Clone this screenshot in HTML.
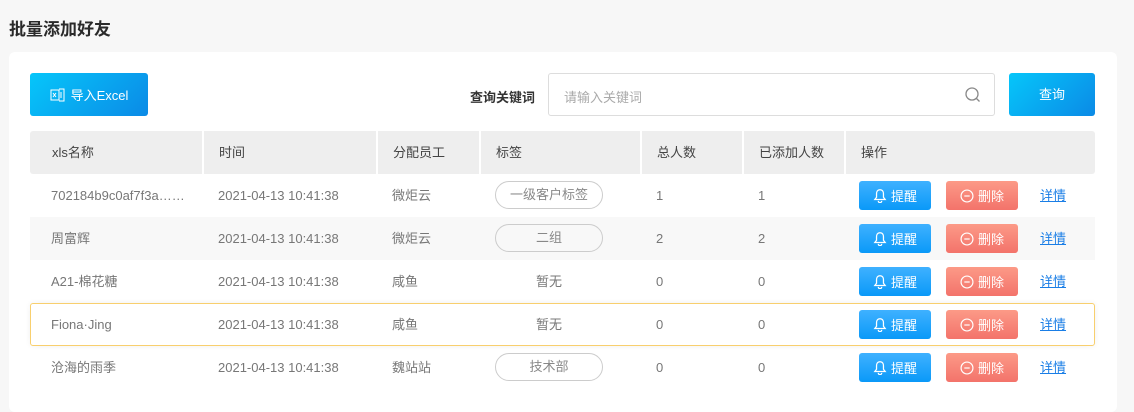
<!DOCTYPE html>
<html><head><meta charset="utf-8"><style>
*{margin:0;padding:0;box-sizing:border-box}
body{width:1134px;height:401px;background:#f7f7f7;font-family:"Liberation Sans","Noto Sans CJK SC",sans-serif;position:relative;overflow:hidden;color:#777;font-size:13px}
.a{position:absolute}
.title{left:9px;top:15px;font-size:17px;font-weight:bold;color:#2a2a2a}
.card{left:9px;top:52px;width:1108px;height:360px;background:#fff;border-radius:6px}
.btnx{left:30px;top:73px;width:118px;height:43px;border-radius:3px;background:linear-gradient(135deg,#06c6fa,#0b8ae6);color:#fff;font-size:13px;display:flex;align-items:center;justify-content:center;gap:6px}
.lbl{left:470px;top:87px;font-weight:bold;color:#333;font-size:13px}
.inp{left:548px;top:73px;width:447px;height:43px;border:1px solid #ddd;border-radius:3px;color:#aaa;padding:13px 0 0 15px}
.q{left:1009px;top:73px;width:86px;height:43px;border-radius:3px;background:linear-gradient(135deg,#06c6fa,#0b8ae6);color:#fff;line-height:43px;text-align:center}
.hd{left:30px;top:131px;width:1065px;height:43px;background:#eee;border-radius:3px}
.hc{top:131px;height:43px;line-height:43px;color:#444;padding-left:16px}
.sep{top:131px;width:2px;height:43px;background:#fff}
.row{left:30px;width:1065px;height:43px}
.c{line-height:43px;height:43px}
.tag{width:108px;height:28px;border:1px solid #ccc;border-radius:14px;text-align:center;line-height:26px;color:#888}
.b1{width:72px;height:29px;border-radius:3px;background:linear-gradient(#3fb1ff,#0a99f8);color:#fff;display:flex;align-items:center;justify-content:center;gap:4px}
.b2{width:72px;height:29px;border-radius:3px;background:linear-gradient(#fc9a87,#f3736b);color:#fff;display:flex;align-items:center;justify-content:center;gap:4px}
.lk{color:#1a7ee6;text-decoration:underline}
</style></head><body>
<div class="a title">批量添加好友</div>
<div class="a card"></div>
<div class="a btnx"><svg width="15" height="14" viewBox="0 0 15 14" fill="none" stroke="#fff" stroke-width="1"><rect x="1" y="2" width="8" height="10"/><path d="M9 1h5v12H9M3 5l3 4M6 5l-3 4M11 4v6"/></svg>导入Excel</div>
<div class="a lbl">查询关键词</div>
<div class="a inp">请输入关键词</div>
<svg class="a" style="left:964px;top:86px" width="18" height="18" viewBox="0 0 18 18" fill="none" stroke="#888" stroke-width="1.3"><circle cx="8" cy="8" r="6"/><path d="M12.5 12.5l3 3"/></svg>
<div class="a q">查询</div>
<div class="a hd"></div>
<div class="a sep" style="left:202px"></div><div class="a sep" style="left:376px"></div><div class="a sep" style="left:479px"></div><div class="a sep" style="left:640px"></div><div class="a sep" style="left:742px"></div><div class="a sep" style="left:844px"></div>
<div class="a hc" style="left:36px">xls名称</div><div class="a hc" style="left:203px">时间</div><div class="a hc" style="left:377px">分配员工</div><div class="a hc" style="left:480px">标签</div><div class="a hc" style="left:641px">总人数</div><div class="a hc" style="left:743px">已添加人数</div><div class="a hc" style="left:845px">操作</div>

<div class="a row" style="top:217px;background:#f8f8f8"></div>
<div class="a row" style="top:303px;border:1px solid #f8cf6e;border-radius:3px;box-shadow:0 0 6px rgba(0,0,0,.06)"></div>

<div class="a c" style="left:51px;top:174px">702184b9c0af7f3a……</div><div class="a c" style="left:218px;top:174px">2021-04-13 10:41:38</div><div class="a c" style="left:392px;top:174px">微炬云</div><div class="a tag" style="left:495px;top:181px">一级客户标签</div><div class="a c" style="left:656px;top:174px">1</div><div class="a c" style="left:758px;top:174px">1</div>
<div class="a c" style="left:51px;top:217px">周富辉</div><div class="a c" style="left:218px;top:217px">2021-04-13 10:41:38</div><div class="a c" style="left:392px;top:217px">微炬云</div><div class="a tag" style="left:495px;top:224px">二组</div><div class="a c" style="left:656px;top:217px">2</div><div class="a c" style="left:758px;top:217px">2</div>
<div class="a c" style="left:51px;top:260px">A21-棉花糖</div><div class="a c" style="left:218px;top:260px">2021-04-13 10:41:38</div><div class="a c" style="left:392px;top:260px">咸鱼</div><div class="a c" style="left:536px;top:260px">暂无</div><div class="a c" style="left:656px;top:260px">0</div><div class="a c" style="left:758px;top:260px">0</div>
<div class="a c" style="left:51px;top:303px">Fiona·Jing</div><div class="a c" style="left:218px;top:303px">2021-04-13 10:41:38</div><div class="a c" style="left:392px;top:303px">咸鱼</div><div class="a c" style="left:536px;top:303px">暂无</div><div class="a c" style="left:656px;top:303px">0</div><div class="a c" style="left:758px;top:303px">0</div>
<div class="a c" style="left:51px;top:346px">沧海的雨季</div><div class="a c" style="left:218px;top:346px">2021-04-13 10:41:38</div><div class="a c" style="left:392px;top:346px">魏站站</div><div class="a tag" style="left:495px;top:353px">技术部</div><div class="a c" style="left:656px;top:346px">0</div><div class="a c" style="left:758px;top:346px">0</div>

<div class="a b1" style="left:859px;top:181px"><svg width="14" height="15" viewBox="0 0 12 13" fill="none" stroke="#fff" stroke-width="1.1"><path d="M6 1.5C3.8 1.5 3 3.3 3 5v3L1.5 10h9L9 8V5C9 3.3 8.2 1.5 6 1.5zM4.5 11.2a1.5 1.5 0 0 0 3 0"/></svg>提醒</div>
<div class="a b2" style="left:946px;top:181px"><svg width="14" height="14" viewBox="0 0 13 13" fill="none" stroke="#fff" stroke-width="1.1"><circle cx="6.5" cy="6.5" r="5.5"/><path d="M4 6.5h5"/></svg>删除</div>
<div class="a c lk" style="left:1040px;top:174px">详情</div>
<div class="a b1" style="left:859px;top:224px"><svg width="14" height="15" viewBox="0 0 12 13" fill="none" stroke="#fff" stroke-width="1.1"><path d="M6 1.5C3.8 1.5 3 3.3 3 5v3L1.5 10h9L9 8V5C9 3.3 8.2 1.5 6 1.5zM4.5 11.2a1.5 1.5 0 0 0 3 0"/></svg>提醒</div>
<div class="a b2" style="left:946px;top:224px"><svg width="14" height="14" viewBox="0 0 13 13" fill="none" stroke="#fff" stroke-width="1.1"><circle cx="6.5" cy="6.5" r="5.5"/><path d="M4 6.5h5"/></svg>删除</div>
<div class="a c lk" style="left:1040px;top:217px">详情</div>
<div class="a b1" style="left:859px;top:267px"><svg width="14" height="15" viewBox="0 0 12 13" fill="none" stroke="#fff" stroke-width="1.1"><path d="M6 1.5C3.8 1.5 3 3.3 3 5v3L1.5 10h9L9 8V5C9 3.3 8.2 1.5 6 1.5zM4.5 11.2a1.5 1.5 0 0 0 3 0"/></svg>提醒</div>
<div class="a b2" style="left:946px;top:267px"><svg width="14" height="14" viewBox="0 0 13 13" fill="none" stroke="#fff" stroke-width="1.1"><circle cx="6.5" cy="6.5" r="5.5"/><path d="M4 6.5h5"/></svg>删除</div>
<div class="a c lk" style="left:1040px;top:260px">详情</div>
<div class="a b1" style="left:859px;top:310px"><svg width="14" height="15" viewBox="0 0 12 13" fill="none" stroke="#fff" stroke-width="1.1"><path d="M6 1.5C3.8 1.5 3 3.3 3 5v3L1.5 10h9L9 8V5C9 3.3 8.2 1.5 6 1.5zM4.5 11.2a1.5 1.5 0 0 0 3 0"/></svg>提醒</div>
<div class="a b2" style="left:946px;top:310px"><svg width="14" height="14" viewBox="0 0 13 13" fill="none" stroke="#fff" stroke-width="1.1"><circle cx="6.5" cy="6.5" r="5.5"/><path d="M4 6.5h5"/></svg>删除</div>
<div class="a c lk" style="left:1040px;top:303px">详情</div>
<div class="a b1" style="left:859px;top:353px"><svg width="14" height="15" viewBox="0 0 12 13" fill="none" stroke="#fff" stroke-width="1.1"><path d="M6 1.5C3.8 1.5 3 3.3 3 5v3L1.5 10h9L9 8V5C9 3.3 8.2 1.5 6 1.5zM4.5 11.2a1.5 1.5 0 0 0 3 0"/></svg>提醒</div>
<div class="a b2" style="left:946px;top:353px"><svg width="14" height="14" viewBox="0 0 13 13" fill="none" stroke="#fff" stroke-width="1.1"><circle cx="6.5" cy="6.5" r="5.5"/><path d="M4 6.5h5"/></svg>删除</div>
<div class="a c lk" style="left:1040px;top:346px">详情</div>
</body></html>
